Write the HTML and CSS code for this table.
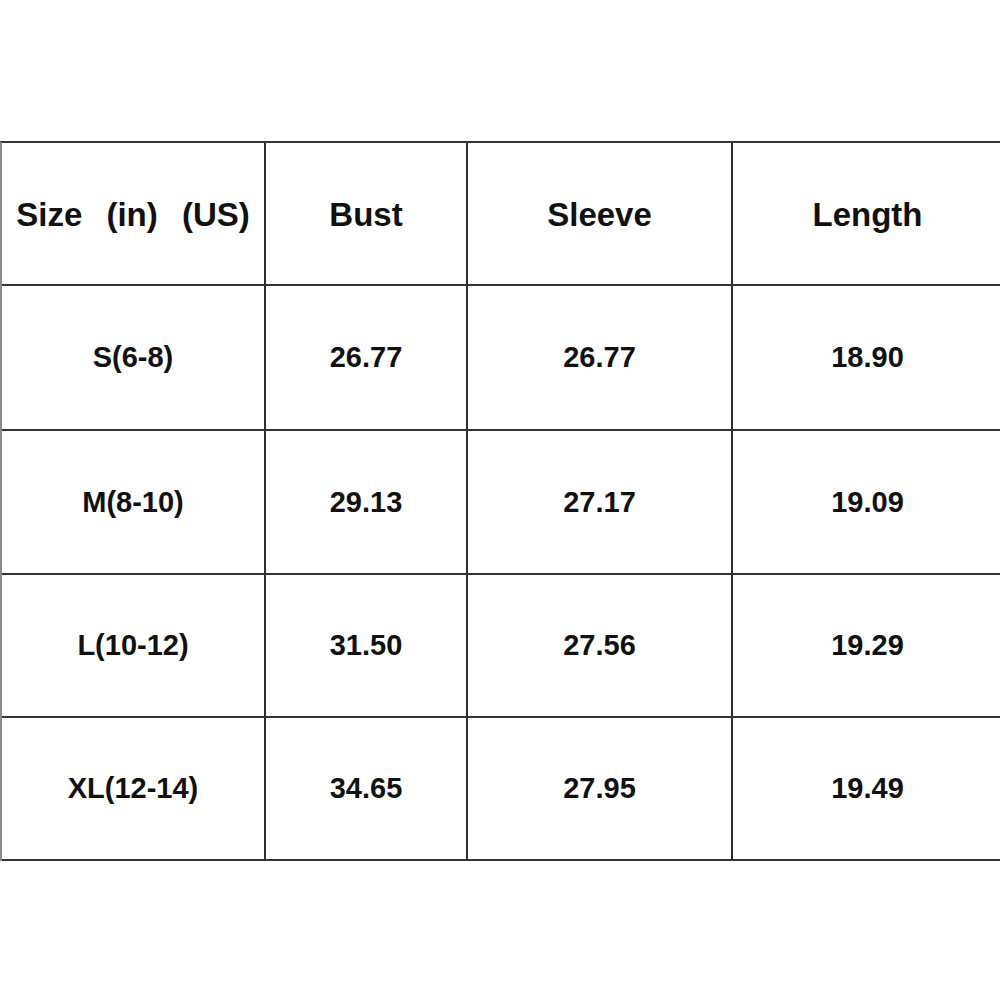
FILE: index.html
```html
<!DOCTYPE html>
<html>
<head>
<meta charset="utf-8">
<link rel="stylesheet" href="styles.css">
</head>
<body>
<div class="chart">
  <div class="cell head wide">Size (in) (US)</div>
  <div class="cell head">Bust</div>
  <div class="cell head">Sleeve</div>
  <div class="cell head last">Length</div>

  <div class="cell">S(6-8)</div>
  <div class="cell">26.77</div>
  <div class="cell">26.77</div>
  <div class="cell last">18.90</div>

  <div class="cell">M(8-10)</div>
  <div class="cell">29.13</div>
  <div class="cell">27.17</div>
  <div class="cell last">19.09</div>

  <div class="cell">L(10-12)</div>
  <div class="cell">31.50</div>
  <div class="cell">27.56</div>
  <div class="cell last">19.29</div>

  <div class="cell">XL(12-14)</div>
  <div class="cell">34.65</div>
  <div class="cell">27.95</div>
  <div class="cell last">19.49</div>
</div>
</body>
</html>
```

FILE: styles.css
```css
html, body {
  margin: 0;
  padding: 0;
  background: #ffffff;
  overflow: hidden;
}

body {
  font-family: "Liberation Sans", Arial, sans-serif;
  color: #111111;
}

.chart {
  margin-top: 141px;
  width: 1000px;
  display: grid;
  grid-template-columns: 264px 202px 265px 269px;
  grid-template-rows: 143px 145px 144px 143px 143px;
  border-top: 2px solid #333333;
  border-left: 2px solid #8a8a8a;
  box-sizing: border-box;
}

.cell {
  box-sizing: border-box;
  border-right: 2px solid #2e2e2e;
  border-bottom: 2px solid #333333;
  display: flex;
  align-items: center;
  justify-content: center;
  font-weight: bold;
  font-size: 29px;
  white-space: nowrap;
}

.cell.last {
  border-right: none;
}

.head {
  font-size: 33px;
  padding-top: 2px;
}

.wide {
  word-spacing: 15px;
}
```
